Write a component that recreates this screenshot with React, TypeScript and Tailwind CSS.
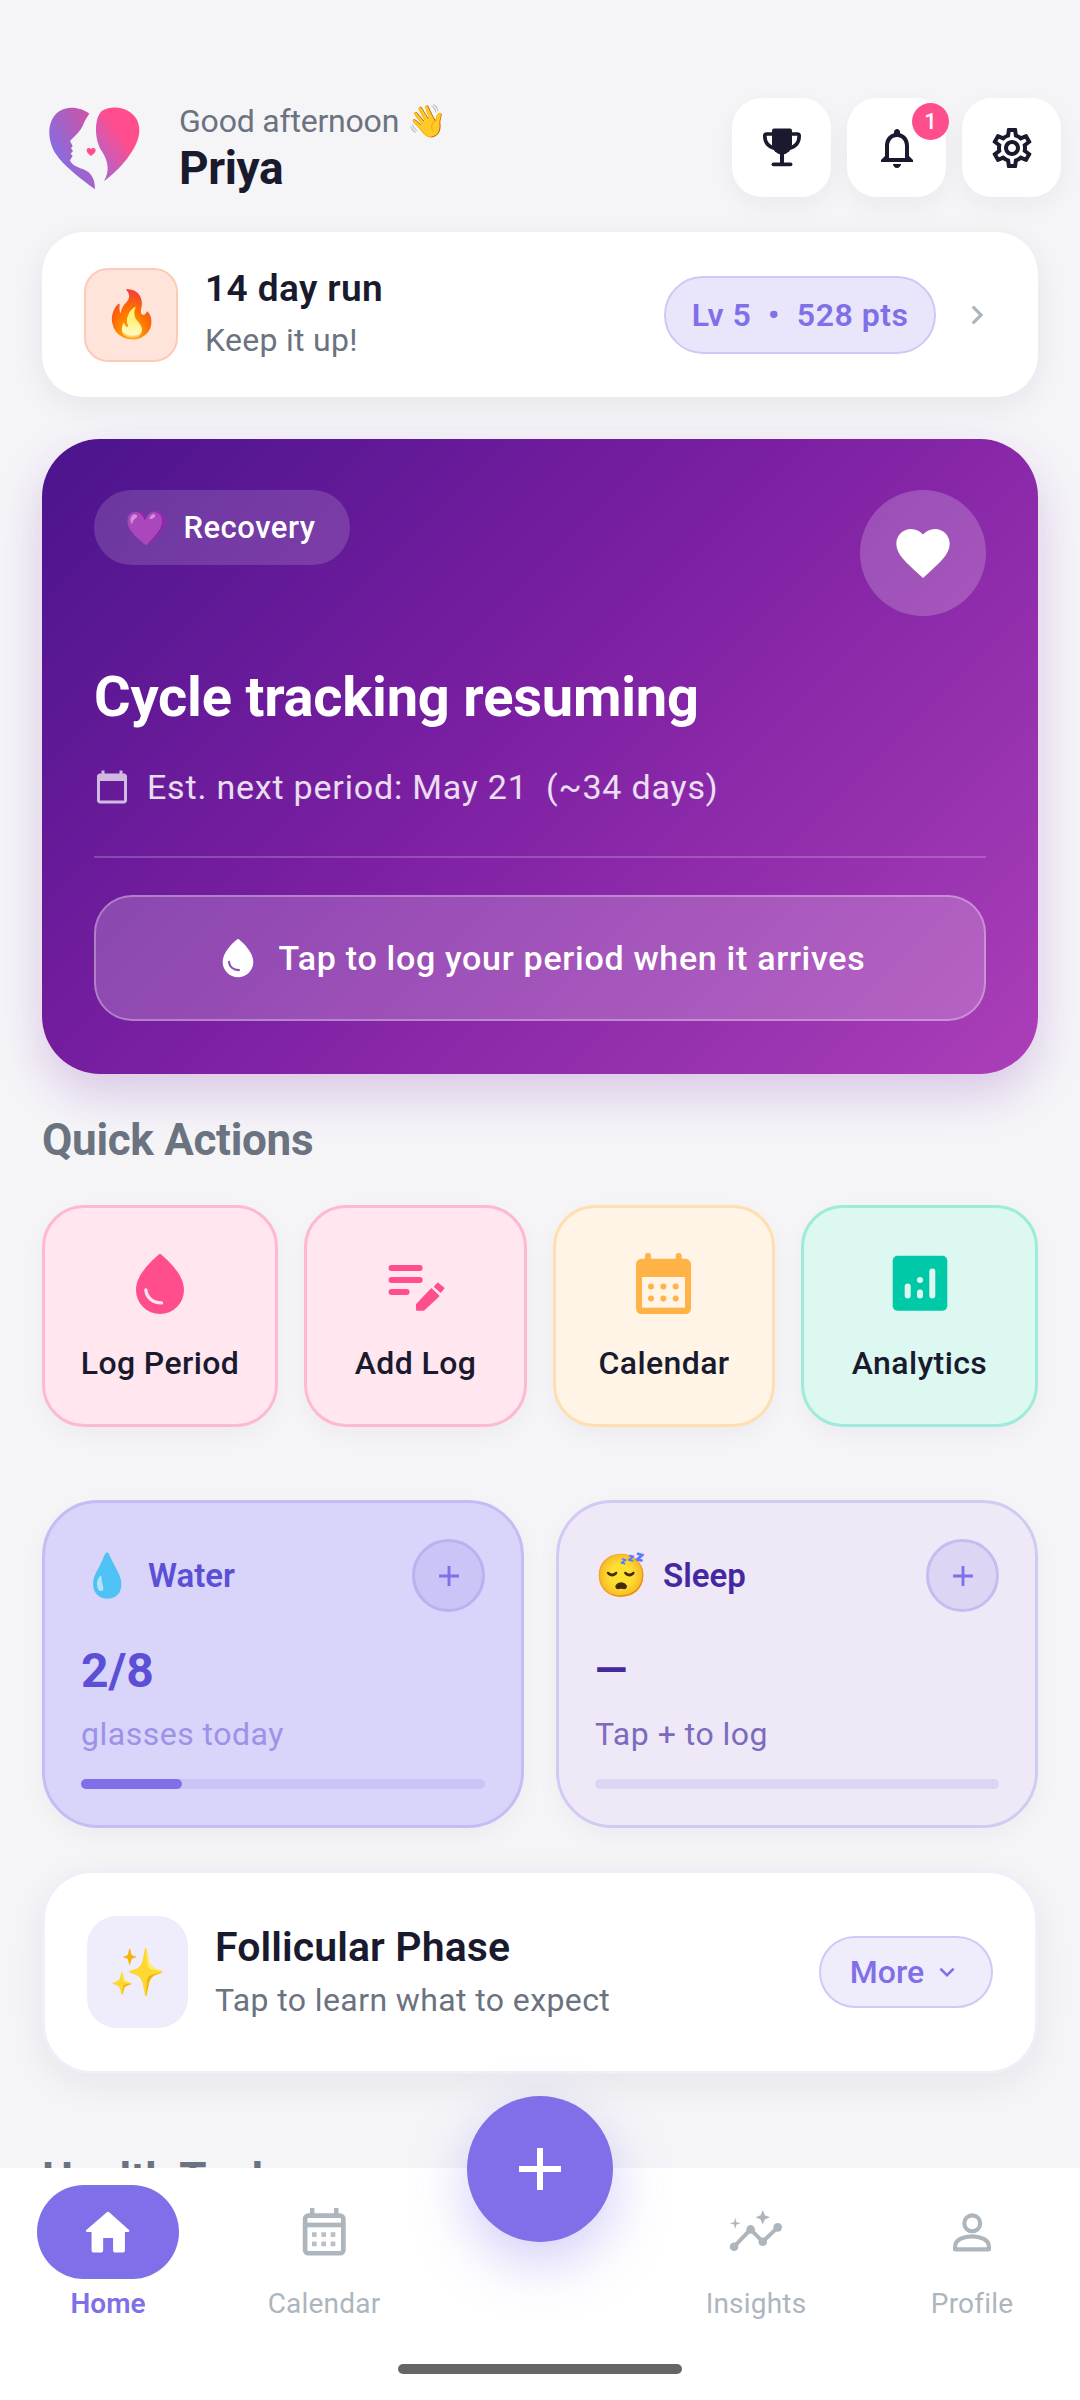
import type { ReactNode } from 'react';
import {
  MdAdd,
  MdCalendarToday,
  MdChevronRight,
  MdFavorite,
  MdKeyboardArrowDown,
  MdOutlineNotifications,
  MdOutlineSettings,
} from 'react-icons/md';

const Logo = () => (
  <svg width="130" height="110" viewBox="0 0 390 330" className="-ml-[17px] -my-[15px] shrink-0">
    <defs>
      <linearGradient id="logoLeft" x1="0" y1="1" x2="1" y2="0">
        <stop offset="0.2" stopColor="#7f6fe8" />
        <stop offset="1" stopColor="#d9509a" />
      </linearGradient>
      <linearGradient id="logoRight" x1="0.1" y1="1" x2="0.8" y2="0.2">
        <stop offset="0" stopColor="#9f68d8" />
        <stop offset="0.75" stopColor="#ff4d8d" />
      </linearGradient>
    </defs>
    <path
      fill="url(#logoLeft)"
      d="M178 68C150 45 100 42 75 72C50 102 55 150 75 185C100 225 155 265 195 295C195 265 185 245 160 235C140 228 125 222 120 208L128 195L122 188L129 180L123 172L128 165L120 150C135 135 150 122 158 105C162 92 170 80 178 68Z"
    />
    <path
      fill="url(#logoRight)"
      d="M215 60C250 40 300 50 320 85C340 125 320 165 290 205C270 230 245 255 222 270C240 240 235 210 215 180C195 150 190 85 215 60Z"
    />
    <path
      fill="#ff4d8d"
      d="M183 195C176 190 170 184 170 178C170 170 179 169 183 175C187 169 197 170 197 178C197 184 190 190 183 195Z"
    />
  </svg>
);

const TrophyIcon = () => (
  <svg width="48" height="48" viewBox="0 0 24 24" fill="currentColor">
    <path d="M7 3.2a1 1 0 0 1 1-1h8a1 1 0 0 1 1 1V10.200a5 5 0 0 1-10 0z" />
    <path
      fill="none"
      stroke="currentColor"
      strokeWidth="1.8"
      strokeLinecap="round"
      d="M7.500 5H4.300a.9.9 0 0 0-.9.9c0 3.600 2.100 5.600 5.100 6.300M16.500 5h3.200a.9.9 0 0 1 .9.9c0 3.600-2.100 5.600-5.100 6.300"
    />
    <rect x="11" y="14" width="2" height="6" />
    <rect x="6.800" y="19.200" width="10.400" height="1.900" rx="0.950" />
  </svg>
);

const DropIcon = ({ size, fill, cut }: { size: number; fill: string; cut: string }) => (
  <svg width={size} height={size} viewBox="0 0 24 24">
    <path fill={fill} d="M11.400 2.300a.9.9 0 0 1 1.200 0C15 4.400 20 9 20 14a8 8 0 0 1-16 0c0-5 5-9.600 7.400-11.700z" />
    <path fill="none" stroke={cut} strokeWidth="1.100" strokeLinecap="round" d="M7.300 14c.2 2.500 2.200 4.200 5.200 4.300" />
  </svg>
);

const AddLogIcon = ({ size, color }: { size: number; color: string }) => (
  <svg width={size} height={size} viewBox="0 0 24 24" fill={color}>
    <rect x="2.850" y="5.700" width="11.350" height="2" rx="1" />
    <rect x="2.850" y="9.700" width="11.350" height="2" rx="1" />
    <rect x="2.850" y="13.700" width="7" height="2" rx="1" />
    <path stroke={color} strokeWidth="0.4" strokeLinejoin="round" d="M12.200 18.800l4.900-5.200 2.500 2.400-5 4.700h-2.200a.3.3 0 0 1-.2-.2z" />
    <path stroke={color} strokeWidth="0.4" strokeLinejoin="round" d="M18.200 12.900l1.100-1.200 2 1.700-1.100 1.300z" />
  </svg>
);

const CalendarFilledIcon = ({ size, color, panel }: { size: number; color: string; panel: string }) => (
  <svg width={size} height={size} viewBox="0 0 24 24" fill={color}>
    <rect x="5.670" y="1.700" width="2" height="4" rx="1" />
    <rect x="15.900" y="1.700" width="2" height="4" rx="1" />
    <rect x="2.670" y="3.600" width="18.330" height="18.400" rx="1.800" />
    <rect x="4.670" y="9.670" width="14.330" height="10.230" fill={panel} />
    {[7.67, 11.78, 15.9].map((cx) => (
      <g key={cx}>
        <circle cx={cx} cy="12.800" r="1" />
        <circle cx={cx} cy="16.800" r="1" />
      </g>
    ))}
  </svg>
);

const AnalyticsIcon = ({ size, color, bar }: { size: number; color: string; bar: string }) => (
  <svg width={size} height={size} viewBox="0 0 24 24">
    <rect x="2.900" y="2.600" width="18.200" height="18.300" rx="1.600" fill={color} />
    <g fill={bar}>
      <rect x="6.900" y="11.800" width="2" height="5" rx="1" />
      <circle cx="12" cy="10.700" r="1" />
      <rect x="11" y="13.800" width="2" height="3" rx="1" />
      <rect x="15.100" y="6.800" width="2" height="10" rx="1" />
    </g>
  </svg>
);

const HomeIcon = () => (
  <svg width="58" height="58" viewBox="0 0 24 24" fill="currentColor">
    <path d="M11.400 3.900a.9.9 0 0 1 1.200 0l8.100 7.300c.3.3.1.8-.3.8H19v7.500c0 .6-.4 1-1 1h-3c-.5 0-.9-.4-.9-1v-5H10v5c0 .6-.4 1-1 1H6.100c-.5 0-.9-.4-.9-1V12H3.300c-.4 0-.6-.5-.3-.8z" />
  </svg>
);

const CalendarOutlineIcon = () => (
  <svg width="56" height="56" viewBox="0 0 24 24" fill="currentColor">
    <rect x="6" y="1.700" width="1.900" height="3.400" />
    <rect x="16.300" y="1.700" width="1.900" height="3.400" />
    <rect x="3.900" y="5" width="16.400" height="16.100" rx="1.400" fill="none" stroke="currentColor" strokeWidth="2" />
    <rect x="3.900" y="8" width="16.400" height="2" />
    {[6.86, 10.86, 14.86].map((x) => (
      <g key={x} opacity="0.85">
        <rect x={x} y="12.100" width="2" height="2" />
        <rect x={x} y="16.100" width="2" height="2" />
      </g>
    ))}
  </svg>
);

const InsightsIcon = () => (
  <svg width="56" height="56" viewBox="0 0 24 24" fill="currentColor">
    <path d="M2.600 18.300l7.100-7.400 5.200 5.300 6.400-6.200" fill="none" stroke="currentColor" strokeWidth="1.700" />
    <circle cx="2.600" cy="18.300" r="1.850" />
    <circle cx="9.700" cy="10.900" r="1.850" />
    <circle cx="14.900" cy="16.200" r="1.850" />
    <circle cx="21.300" cy="10" r="1.850" />
    <path d="M14.900 2.600l.9 2.200 2.200.9-2.200.9-.9 2.200-.9-2.200-2.200-.9 2.200-.9z" />
    <path d="M3.100 5.900l.5 1.900 1.900.5-1.900.5-.5 1.900-.5-1.900-1.900-.5 1.900-.5z" />
  </svg>
);

const ProfileIcon = () => (
  <svg width="58" height="58" viewBox="0 0 24 24" fill="none" stroke="currentColor" strokeWidth="1.700" strokeLinejoin="round">
    <circle cx="12.100" cy="8.400" r="3.300" />
    <path d="M5 19.200V18c0-3 4-4.200 7-4.200s7 1.200 7 4.200v1.200z" />
  </svg>
);

const HeaderButton = ({ children, badge }: { children: ReactNode; badge?: string }) => (
  <div className="relative flex h-[99px] w-[99px] items-center justify-center rounded-[30px] bg-white text-[#1a1a2e] shadow-[0_8px_24px_rgba(30,30,60,0.05)]">
    {children}
    {badge && (
      <span className="absolute right-[-3px] top-[5px] flex h-[37px] w-[37px] items-center justify-center rounded-full bg-[#ff4d8d] text-[22px] font-medium text-white">
        {badge}
      </span>
    )}
  </div>
);

const QuickAction = ({
  icon,
  label,
  box,
}: {
  icon: ReactNode;
  label: string;
  box: string;
}) => (
  <div className={`flex h-[222px] flex-col items-center rounded-[42px] border-[3px] pt-[39px] shadow-[0_8px_24px_rgba(30,30,60,0.04)] ${box}`}>
    <div className="flex h-[74px] items-center justify-center">{icon}</div>
    <span className="mt-[22px] text-[32px] font-medium leading-[40px] tracking-[0.4px] text-[#1a1a2e]">{label}</span>
  </div>
);

const NavItem = ({ icon, label }: { icon: ReactNode; label: string }) => (
  <div className="flex flex-col items-center">
    <div className="flex h-[94px] w-[142px] items-center justify-center text-[#adb5bd]">{icon}</div>
    <span className="mt-[7px] text-[28px] leading-[36px] tracking-[0.2px] text-[#adb5bd]">{label}</span>
  </div>
);

export default function App() {
  return (
    <div className="relative h-[2400px] w-[1080px] overflow-hidden bg-[#f5f5f8] font-[Roboto,sans-serif]">
      <main className="pt-[98px]">
        <header className="flex items-start pl-[47px] pr-[19px]">
          <div className="mt-[8px]">
            <Logo />
          </div>
          <div className="ml-[-51px] mt-[4px] flex-1 pl-[70px]">
            <p className="text-[32px] leading-[38px] tracking-[-0.2px] text-[#6b7280]">Good afternoon 👋</p>
            <p className="mt-[2px] text-[46px] font-bold leading-[52px] tracking-[-0.4px] text-[#1a1a2e]">Priya</p>
          </div>
          <div className="flex gap-[16px]">
            <HeaderButton>
              <TrophyIcon />
            </HeaderButton>
            <HeaderButton badge="1">
              <MdOutlineNotifications size={48} />
            </HeaderButton>
            <HeaderButton>
              <MdOutlineSettings size={48} />
            </HeaderButton>
          </div>
        </header>

        <section className="mx-[42px] mt-[35px] flex h-[165px] items-center rounded-[42px] bg-white pl-[42px] pr-[42px] shadow-[0_8px_32px_rgba(30,30,60,0.07)]">
          <div className="flex h-[94px] w-[94px] items-center justify-center rounded-[24px] border-2 border-[#ffc9b8] bg-[#ffe4dc] text-[46px]">
            🔥
          </div>
          <div className="ml-[27px] flex-1">
            <p className="-mt-[3px] text-[37px] font-semibold leading-[42px] tracking-[0.4px] text-[#1a1a2e]">14 day run</p>
            <p className="mt-[12px] text-[32px] leading-[36px] tracking-[0.3px] text-[#6b7280]">Keep it up!</p>
          </div>
          <div className="flex h-[78px] w-[272px] items-center justify-center rounded-full border-2 border-[#cdc8f5] bg-[#e9e6fb] text-[32px] font-semibold tracking-[0.5px] text-[#7f6fe8]">
            Lv 5 &nbsp;•&nbsp; 528 pts
          </div>
          <MdChevronRight size={38} className="ml-[22px] text-[#adb5bd]" />
        </section>

        <section className="mx-[42px] mt-[42px] h-[635px] rounded-[58px] bg-[linear-gradient(135deg,#4a148c_0%,#7b1fa2_45%,#ab3fb8_100%)] px-[52px] pt-[51px] shadow-[0_20px_48px_rgba(123,31,162,0.22)]">
          <div className="flex items-start justify-between">
            <div className="flex h-[75px] w-[256px] items-center rounded-full bg-white/15 pl-[31px] pt-[2px] text-[31px] font-medium tracking-[0.5px] text-white">
              <span className="mr-[16px] text-[34px]">💜</span>Recovery
            </div>
            <div className="flex h-[126px] w-[126px] items-center justify-center rounded-full bg-white/20 text-white">
              <MdFavorite size={64} />
            </div>
          </div>
          <h1 className="mt-[48px] text-[56px] font-bold leading-[66px] tracking-[-0.2px] text-white">
            Cycle tracking resuming
          </h1>
          <div className="mt-[35px] flex items-center text-[34px] leading-[44px] tracking-[0.8px] text-white/85">
            <MdCalendarToday size={36} className="mr-[17px] text-white/70" />
            <span className="whitespace-pre">Est. next period: May 21  (~34 days)</span>
          </div>
          <div className="mt-[47px] h-[2px] bg-white/20" />
          <div className="mt-[37px] flex h-[126px] items-center justify-center rounded-[38px] border-2 border-white/30 bg-white/20 text-[34px] font-medium tracking-[0.7px] text-white">
            <span className="mr-[18px] flex">
              <DropIcon size={46} fill="#ffffff" cut="#8f4bb0" />
            </span>
            Tap to log your period when it arrives
          </div>
        </section>

        <h2 className="ml-[42px] mt-[41px] text-[44px] font-bold leading-[50px] tracking-[-0.3px] text-[#6b7280]">Quick Actions</h2>
        <div className="mx-[42px] mt-[40px] grid grid-cols-[236px_223px_222px_237px] gap-x-[26px]">
          <QuickAction icon={<DropIcon size={72} fill="#ff4d8d" cut="#ffe6ef" />} label="Log Period" box="border-[#ffb8d4] bg-[#ffe6ef]" />
          <QuickAction icon={<AddLogIcon size={72} color="#ff4d8d" />} label="Add Log" box="border-[#ffb8d4] bg-[#ffe6ef]" />
          <QuickAction icon={<CalendarFilledIcon size={72} color="#ffb347" panel="#fff4e5" />} label="Calendar" box="border-[#ffdfb0] bg-[#fff4e5]" />
          <QuickAction icon={<AnalyticsIcon size={72} color="#00c9a7" bar="#dcf8f1" />} label="Analytics" box="border-[#9eeadb] bg-[#dcf8f1]" />
        </div>

        <div className="mx-[42px] mt-[73px] grid grid-cols-2 gap-x-[32px]">
          <div className="h-[328px] rounded-[56px] border-[3px] border-[#c4bdf5] bg-[#d9d4fa] px-[36px] pt-[36px] shadow-[0_8px_24px_rgba(30,30,60,0.04)]">
            <div className="flex items-center justify-between">
              <div className="flex items-center">
                <span className="mr-[15px] text-[42px] leading-none">💧</span>
                <span className="text-[33px] font-semibold text-[#5b4fd6]">Water</span>
              </div>
              <div className="flex h-[73px] w-[73px] items-center justify-center rounded-full border-[3px] border-[#b9b2f0] bg-[#cbc4f6] text-[#7f6fe8]">
                <MdAdd size={34} />
              </div>
            </div>
            <p className="mt-[31px] text-[48px] font-bold leading-[56px] text-[#5b4fd6]">2/8</p>
            <p className="mt-[15px] text-[32px] leading-[40px] tracking-[0.5px] text-[#9c92e8]">glasses today</p>
            <div className="mt-[25px] h-[10px] rounded-full bg-[#cbc4f6]">
              <div className="h-full w-1/4 rounded-full bg-[#7f6fe8]" />
            </div>
          </div>
          <div className="h-[328px] rounded-[56px] border-[3px] border-[#d0cbf3] bg-[#eee8f7] px-[36px] pt-[36px] shadow-[0_8px_24px_rgba(30,30,60,0.04)]">
            <div className="flex items-center justify-between">
              <div className="flex items-center">
                <span className="mr-[16px] text-[42px] leading-none">😴</span>
                <span className="text-[33px] font-semibold text-[#4527a0]">Sleep</span>
              </div>
              <div className="flex h-[73px] w-[73px] items-center justify-center rounded-full border-[3px] border-[#c4bdf0] bg-[#dcd6f4] text-[#7f6fe8]">
                <MdAdd size={34} />
              </div>
            </div>
            <p className="mt-[31px] text-[42px] font-bold leading-[56px] text-[#4527a0]">—</p>
            <p className="mt-[15px] text-[32px] leading-[40px] tracking-[0.5px] text-[#7c6bbd]">Tap + to log</p>
            <div className="mt-[25px] h-[10px] rounded-full bg-[#dcd6f4]" />
          </div>
        </div>

        <section className="mx-[42px] mt-[42px] flex h-[204px] items-center rounded-[50px] border-[3px] border-[#f0eef8] bg-white pl-[42px] pr-[42px] shadow-[0_10px_36px_rgba(30,30,60,0.07)]">
          <div className="flex h-[112px] w-[101px] items-center justify-center rounded-[30px] bg-[#efecfb] text-[46px]">✨</div>
          <div className="ml-[27px] flex-1">
            <p className="-mt-[2px] text-[41px] font-semibold leading-[46px] tracking-[0.1px] text-[#1a1a2e]">Follicular Phase</p>
            <p className="mt-[11px] text-[32px] leading-[38px] tracking-[0.4px] text-[#6b7280]">Tap to learn what to expect</p>
          </div>
          <div className="flex h-[72px] w-[174px] items-center justify-center rounded-full border-2 border-[#cfc9f7] bg-[#efecfb] text-[32px] font-medium text-[#7f6fe8]">
            More
            <MdKeyboardArrowDown size={30} className="ml-[8px]" />
          </div>
        </section>

        <h2 className="ml-[42px] mt-[80px] text-[44px] font-bold leading-[50px] tracking-[-0.3px] text-[#6b7280]">Health Tools</h2>
      </main>

      <nav className="absolute inset-x-0 bottom-0 h-[232px] bg-white">
        <div className="grid grid-cols-5 justify-items-center pt-[17px]">
          <div className="flex flex-col items-center">
            <div className="flex h-[94px] w-[142px] items-center justify-center rounded-full bg-[#7f6fe8] text-white">
              <HomeIcon />
            </div>
            <span className="mt-[7px] text-[28px] font-semibold leading-[36px] text-[#7f6fe8]">Home</span>
          </div>
          <NavItem icon={<CalendarOutlineIcon />} label="Calendar" />
          <div />
          <NavItem icon={<InsightsIcon />} label="Insights" />
          <NavItem icon={<ProfileIcon />} label="Profile" />
        </div>
        <div className="absolute bottom-[26px] left-[398px] h-[10px] w-[284px] rounded-full bg-[#666666]" />
      </nav>

      <div className="absolute left-[467px] top-[2096px] flex h-[146px] w-[146px] items-center justify-center rounded-full bg-[#7f6fe8] text-white shadow-[0_20px_56px_rgba(127,111,232,0.35)]">
        <MdAdd size={72} />
      </div>
    </div>
  );
}
